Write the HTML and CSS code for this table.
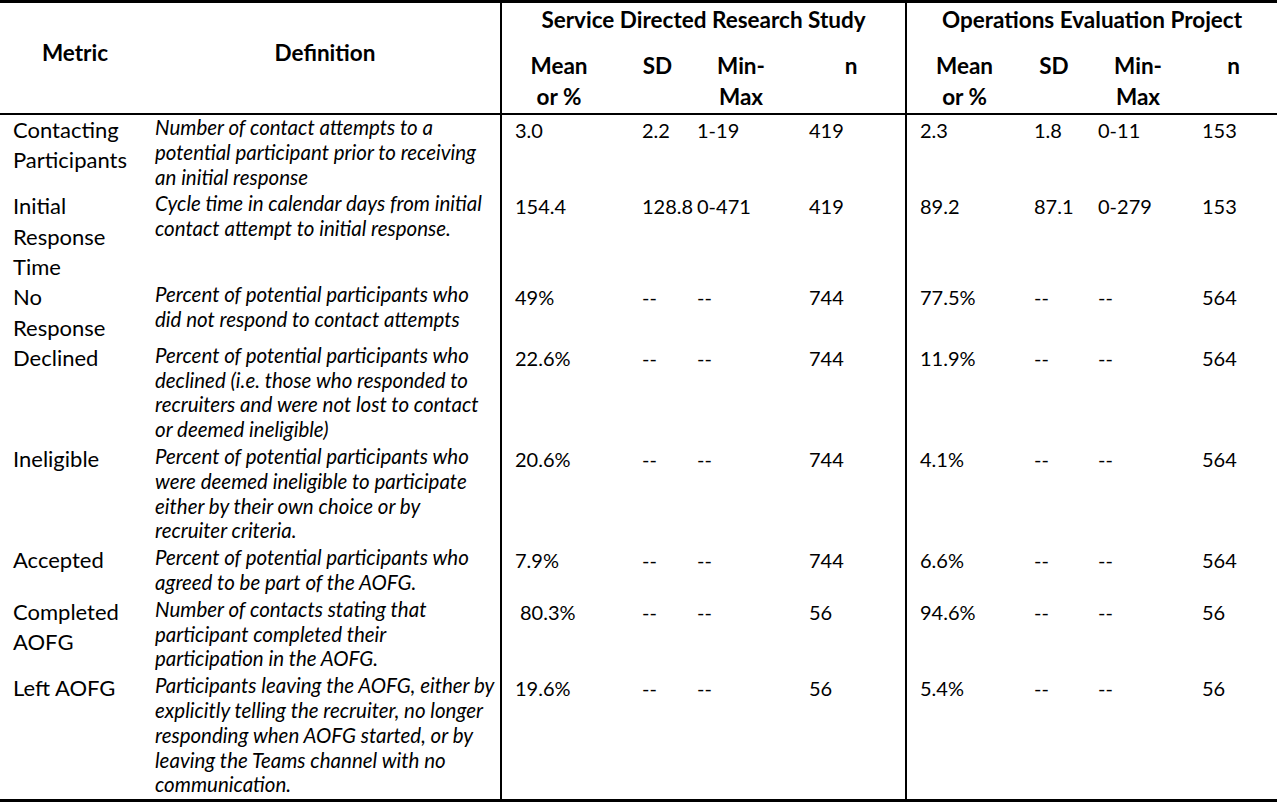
FILE: index.html
```html
<!DOCTYPE html>
<html lang="en">
<head>
    <meta charset="UTF-8">
    <meta name="viewport" content="width=device-width, initial-scale=1.0">
    <title>Recruitment Metrics</title>
    <link rel="stylesheet" href="styles.css">
</head>
<body>
    <table class="metrics">
        <colgroup>
            <col class="c-metric">
            <col class="c-def">
            <col class="c-mean1"><col class="c-sd1"><col class="c-mm1"><col class="c-n1">
            <col class="c-mean2"><col class="c-sd2"><col class="c-mm2"><col class="c-n2">
        </colgroup>
        <thead>
            <tr class="group-row">
                <th rowspan="2" class="head-main">Metric</th>
                <th rowspan="2" class="head-main">Definition</th>
                <th colspan="4" class="group study-start">Service Directed Research Study</th>
                <th colspan="4" class="group study-start">Operations Evaluation Project</th>
            </tr>
            <tr class="sub-row">
                <th class="study-start mean-head">Mean<br>or %</th>
                <th>SD</th>
                <th>Min-<br>Max</th>
                <th>n</th>
                <th class="study-start">Mean<br>or %</th>
                <th>SD</th>
                <th>Min-<br>Max</th>
                <th>n</th>
            </tr>
        </thead>
        <tbody>
            <tr>
                <td class="metric">Contacting<br>Participants</td>
                <td class="def">Number of contact attempts to a<br>potential participant prior to receiving<br>an initial response</td>
                <td class="num study-start">3.0</td><td class="num">2.2</td><td class="num">1-19</td><td class="num">419</td>
                <td class="num study-start">2.3</td><td class="num">1.8</td><td class="num">0-11</td><td class="num">153</td>
            </tr>
            <tr>
                <td class="metric">Initial<br>Response<br>Time</td>
                <td class="def">Cycle time in calendar days from initial<br>contact attempt to initial response.</td>
                <td class="num study-start">154.4</td><td class="num">128.8</td><td class="num">0-471</td><td class="num">419</td>
                <td class="num study-start">89.2</td><td class="num">87.1</td><td class="num">0-279</td><td class="num">153</td>
            </tr>
            <tr>
                <td class="metric">No<br>Response</td>
                <td class="def">Percent of potential participants who<br>did not respond to contact attempts</td>
                <td class="num study-start">49%</td><td class="num">--</td><td class="num">--</td><td class="num">744</td>
                <td class="num study-start">77.5%</td><td class="num">--</td><td class="num">--</td><td class="num">564</td>
            </tr>
            <tr>
                <td class="metric">Declined</td>
                <td class="def">Percent of potential participants who<br>declined (i.e. those who responded to<br>recruiters and were not lost to contact<br>or deemed ineligible)</td>
                <td class="num study-start">22.6%</td><td class="num">--</td><td class="num">--</td><td class="num">744</td>
                <td class="num study-start">11.9%</td><td class="num">--</td><td class="num">--</td><td class="num">564</td>
            </tr>
            <tr>
                <td class="metric">Ineligible</td>
                <td class="def">Percent of potential participants who<br>were deemed ineligible to participate<br>either by their own choice or by<br>recruiter criteria.</td>
                <td class="num study-start">20.6%</td><td class="num">--</td><td class="num">--</td><td class="num">744</td>
                <td class="num study-start">4.1%</td><td class="num">--</td><td class="num">--</td><td class="num">564</td>
            </tr>
            <tr>
                <td class="metric">Accepted</td>
                <td class="def">Percent of potential participants who<br>agreed to be part of the AOFG.</td>
                <td class="num study-start">7.9%</td><td class="num">--</td><td class="num">--</td><td class="num">744</td>
                <td class="num study-start">6.6%</td><td class="num">--</td><td class="num">--</td><td class="num">564</td>
            </tr>
            <tr>
                <td class="metric">Completed<br>AOFG</td>
                <td class="def">Number of contacts stating that<br>participant completed their<br>participation in the AOFG.</td>
                <td class="num study-start indent">80.3%</td><td class="num">--</td><td class="num">--</td><td class="num">56</td>
                <td class="num study-start">94.6%</td><td class="num">--</td><td class="num">--</td><td class="num">56</td>
            </tr>
            <tr class="last">
                <td class="metric">Left AOFG</td>
                <td class="def">Participants leaving the AOFG, either by<br>explicitly telling the recruiter, no longer<br>responding when AOFG started, or by<br>leaving the Teams channel with no<br>communication.</td>
                <td class="num study-start">19.6%</td><td class="num">--</td><td class="num">--</td><td class="num">56</td>
                <td class="num study-start">5.4%</td><td class="num">--</td><td class="num">--</td><td class="num">56</td>
            </tr>
        </tbody>
    </table>
</body>
</html>
```

FILE: styles.css
```css
body {
    margin: 0;
    background-color: #fff;
    color: #000;
    font-family: Lato, "Liberation Sans", sans-serif;
}
.metrics {
    width: 1277px;
    border-collapse: collapse;
    table-layout: fixed;
    border-top: 3px solid #000;
    border-bottom: 3px solid #000;
}
.c-metric { width: 150px; }
.c-def { width: 351px; }
.c-mean1 { width: 129px; }
.c-sd1 { width: 55px; }
.c-mm1 { width: 112px; }
.c-n1 { width: 109px; }
.c-mean2 { width: 116px; }
.c-sd2 { width: 64px; }
.c-mm2 { width: 104px; }
.c-n2 { width: 87px; }

/* header */
thead th {
    font-weight: bold;
    font-size: 22.5px;
    line-height: 31px;
    text-align: center;
    padding: 0;
    white-space: nowrap;
}
.head-main {
    vertical-align: middle;
    padding-bottom: 12px;
    border-bottom: 2px solid #000;
}
.group-row th.group {
    height: 34px;
    padding-top: 1px;
    vertical-align: top;
}
.sub-row th {
    vertical-align: top;
    padding-top: 12px;
    padding-bottom: 1px;
    border-bottom: 2px solid #000;
}
.sub-row th.mean-head {
    padding-right: 14px;
}
.study-start {
    border-left: 2px solid #000;
}

/* body */
tbody td {
    vertical-align: top;
    padding: 0;
    white-space: nowrap;
}
.metric {
    font-size: 22px;
    line-height: 30.3px;
    padding: 0 4px 0 13px;
}
.def {
    font-style: italic;
    font-size: 20.5px;
    line-height: 24.8px;
    padding: 0 2px 2px 5px;
}
.num {
    font-size: 20px;
    line-height: 30.3px;
    padding: 0 0 0 12px;
}
.num.study-start {
    padding-left: 13px;
}
.num.indent {
    padding-left: 18px;
}
```
